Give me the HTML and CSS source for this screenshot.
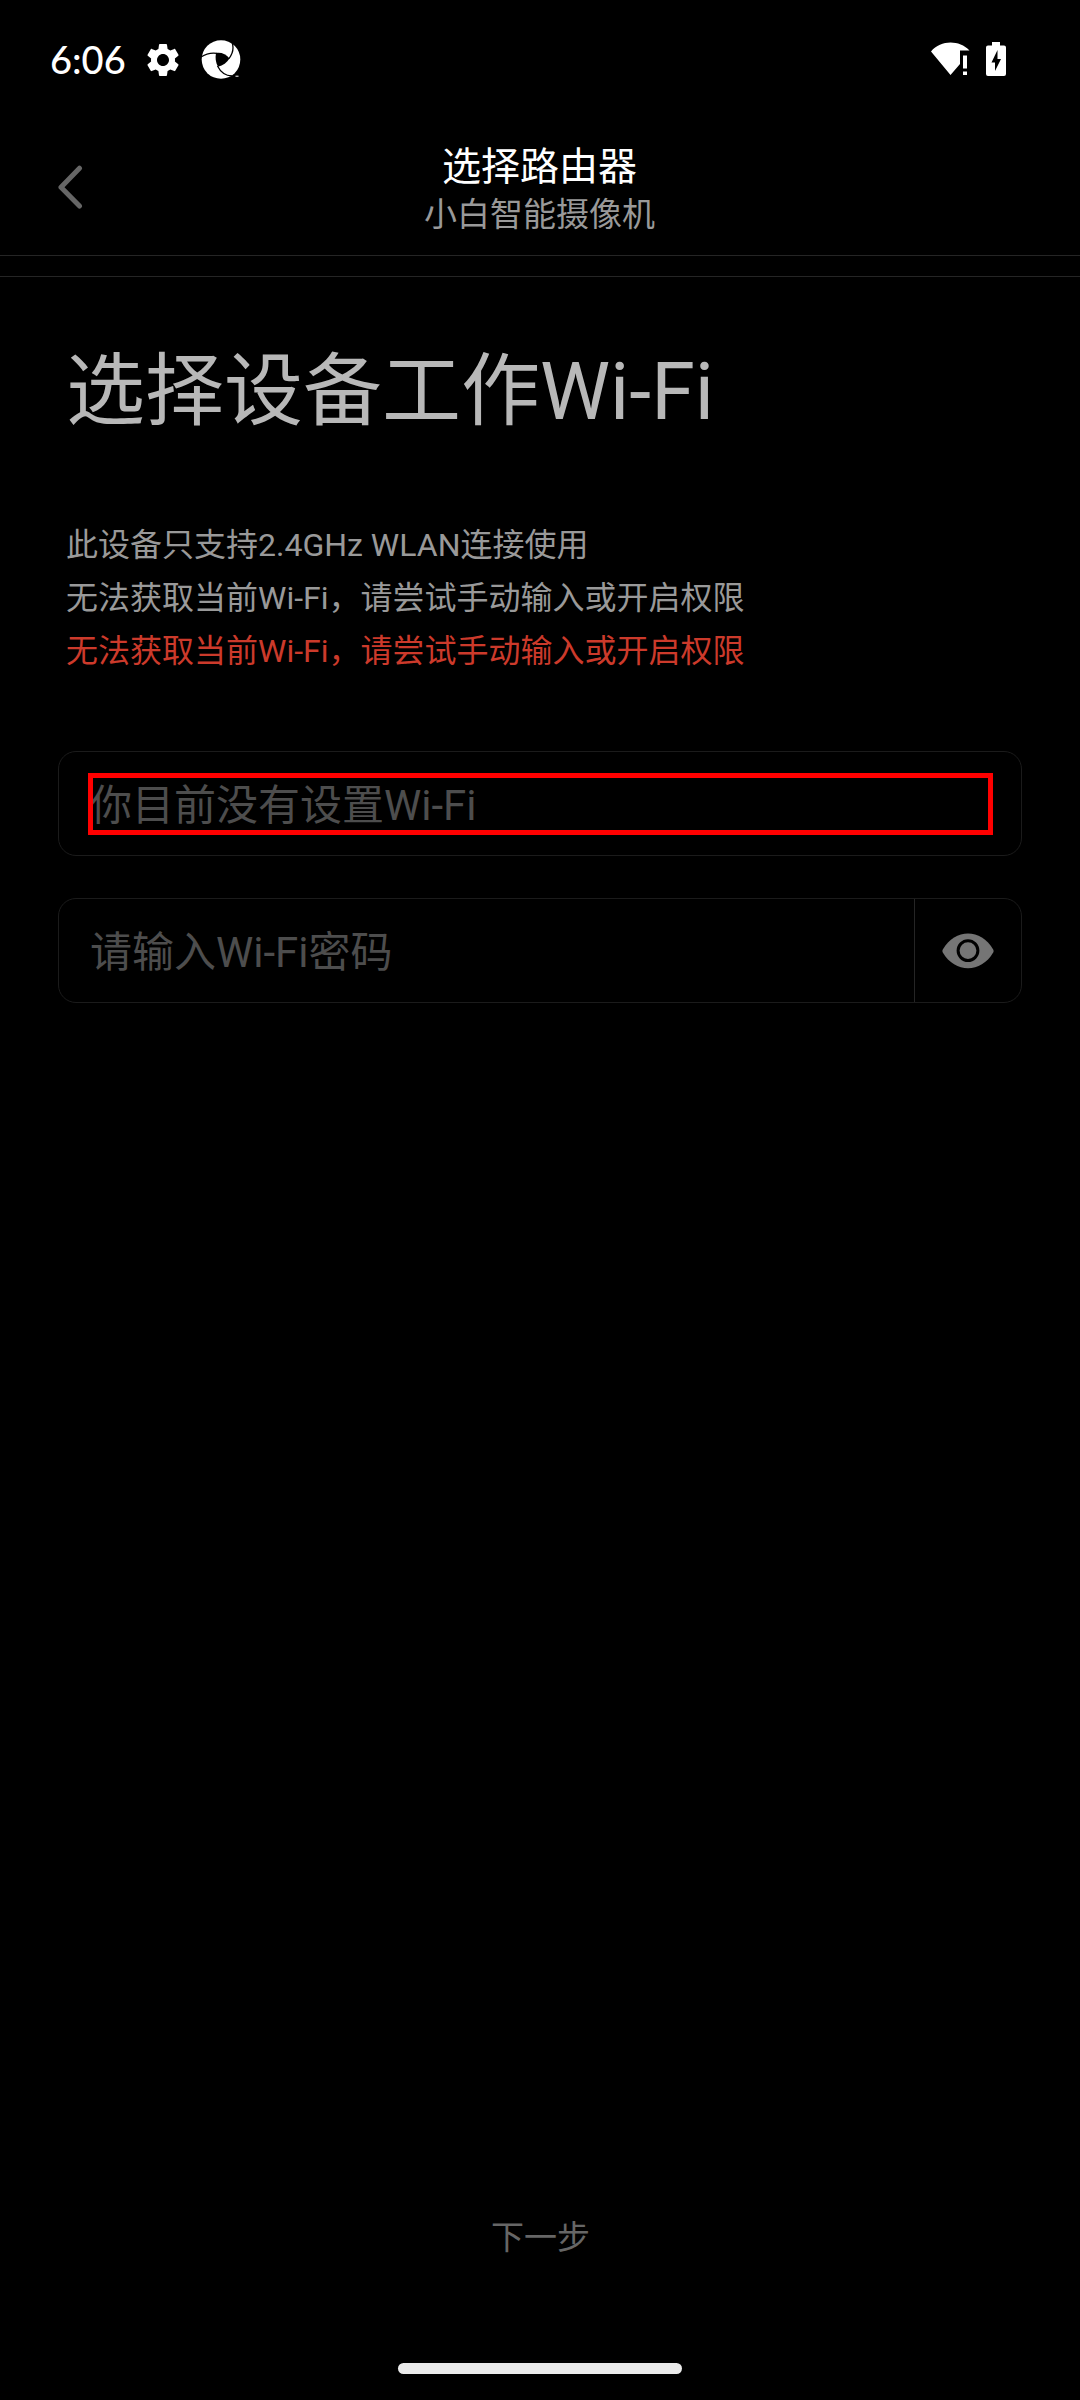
FILE: index.html
```html
<!DOCTYPE html>
<html lang="zh-CN">
<head>
<meta charset="utf-8">
<title>选择路由器</title>
<link rel="stylesheet" href="styles.css">
</head>
<body>
<div class="screen">
  <div class="status">
    <span class="clock">6:06</span>
    <svg class="gear" width="40" height="40" viewBox="0 0 24 24"><path fill="#fff" d="M19.14 12.94c.04-.3.06-.61.06-.94 0-.32-.02-.64-.07-.94l2.03-1.58c.18-.14.23-.41.12-.61l-1.92-3.32c-.12-.22-.37-.29-.59-.22l-2.39.96c-.5-.38-1.03-.7-1.62-.94l-.36-2.54c-.04-.24-.24-.41-.48-.41h-3.84c-.24 0-.43.17-.47.41l-.36 2.54c-.59.24-1.13.57-1.62.94l-2.39-.96c-.22-.08-.47 0-.59.22L2.74 8.87c-.12.21-.08.47.12.61l2.03 1.58c-.05.3-.09.63-.09.94s.02.64.07.94l-2.03 1.58c-.18.14-.23.41-.12.61l1.92 3.32c.12.22.37.29.59.22l2.39-.96c.5.38 1.03.7 1.62.94l.36 2.54c.05.24.24.41.48.41h3.84c.24 0 .44-.17.47-.41l.36-2.54c.59-.24 1.13-.56 1.62-.94l2.39.96c.22.08.47 0 .59-.22l1.92-3.32c.12-.22.07-.47-.12-.61l-2.01-1.58zM12 15.6c-1.98 0-3.6-1.62-3.6-3.6s1.62-3.6 3.6-3.6 3.6 1.62 3.6 3.6-1.62 3.6-3.6 3.6z"/></svg>
    <svg class="swirl" width="40" height="40" viewBox="0 0 40 40">
      <circle cx="20" cy="19.500" r="19.300" fill="#fff"/>
      <path fill="#000" d="M15 13C20 12 25 14 28.500 18.500C26 22.500 22 25.500 17 26.700C14.800 23 14 18 15 13Z"/>
      <path fill="none" stroke="#000" stroke-width="1.300" d="M0 17C5 13.500 10 12.500 16 13.300M31 2C33 8 32 13.500 28 18.500M16.500 26C19 31 24 35.700 31 36"/>
      <path fill="#000" d="M26 40C30 38.500 32 37 34 34.500L40 40Z"/>
      <path fill="#fff" d="M34.500 35.700h3v1h-3z"/>
    </svg>
    <span class="spacer"></span>
    <svg class="wifi" width="40" height="34" viewBox="0 0 40 34"><path fill="#fff" d="M0 9.500C10-2.200 28-2.200 38.500 8.500H29V22L19.500 33ZM32 13.500h4v13h-4zM32 29.500h4v3.500h-4z"/></svg>
    <svg class="battery" width="20" height="34" viewBox="0 0 20 34"><path fill="#fff" fill-rule="evenodd" d="M6 0h8v3.500h4q2 0 2 2V32q0 2-2 2H2q-2 0-2-2V5.500q0-2 2-2h4ZM11.500 8L5.500 20.500h3.500V29L15 17h-3.500Z"/></svg>
  </div>
  <header class="header">
    <svg class="back" width="26" height="44" viewBox="0 0 26 44"><path fill="none" stroke="#666" stroke-width="5" stroke-linecap="round" stroke-linejoin="round" d="M22.500 3.200L4 22.200L22.500 41"/></svg>
    <div class="titles">
      <div class="title">选择路由器</div>
      <div class="subtitle">小白智能摄像机</div>
    </div>
  </header>
  <div class="strip"></div>
  <main class="content">
    <h1 class="heading">选择设备工作Wi-Fi</h1>
    <p class="note">此设备只支持2.4GHz WLAN连接使用</p>
    <p class="note">无法获取当前Wi-Fi，请尝试手动输入或开启权限</p>
    <p class="note warning">无法获取当前Wi-Fi，请尝试手动输入或开启权限</p>
    <div class="field network"><span class="placeholder">你目前没有设置Wi-Fi</span><span class="focus"></span></div>
    <div class="field"><span class="placeholder">请输入Wi-Fi密码</span>
      <span class="reveal"><svg width="52" height="36" viewBox="0 0 52 36"><path fill="#757575" d="M.8 16.500C13-5 39-5 51.200 16.500Q52 18 51.200 19.500C39 40.500 13 40.500.8 19.500Q0 18 .8 16.500Z"/><circle cx="26" cy="17.600" r="9.900" fill="#757575" stroke="#000" stroke-width="3"/></svg></span>
    </div>
  </main>
  <div class="next">下一步</div>
  <div class="home"></div>
</div>
</body>
</html>
```
FILE: styles.css
```css
* { box-sizing: border-box; }
body { margin: 0; background: #000; }
.screen {
  width: 1080px;
  height: 2400px;
  display: flex;
  flex-direction: column;
  background: #000;
  color: #b8b8b8;
  font-family: Roboto, "Noto Sans CJK SC", sans-serif;
  white-space: nowrap;
}
.status { height: 120px; padding: 0 74px 0 50px; display: flex; align-items: center; }
.clock { width: 93px; padding-bottom: 2px; font: 500 38px/40px Lato, sans-serif; color: #fff; }
.swirl { margin-left: 18px; }
.spacer { flex: 1; }
.battery { margin: 0 0 2px 15px; }
.wifi { margin-bottom: 2px; }
.header {
  height: 136px;
  display: grid;
  grid-template-columns: 200px 1fr 200px;
  border-bottom: 1px solid #252525;
}
.back { margin: 45px 0 0 57px; }
.titles { padding: 22px 1px 0 0; text-align: center; }
.title { font-size: 39px; line-height: 50px; color: #fff; }
.subtitle { font-size: 33px; line-height: 46px; color: #999; }
.strip { height: 21px; border-bottom: 1px solid #252525; }
.content { flex: 1; padding: 0 58px; }
.heading { margin: 65px 0 77px 8px; font-size: 79px; line-height: 100px; font-weight: 400; }
.note { margin: 0 0 0 8px; font-size: 32px; line-height: 53px; color: #999; }
.warning { color: #cc3a2b; }
.field {
  position: relative;
  display: flex;
  align-items: stretch;
  justify-content: space-between;
  height: 105px;
  margin-top: 42px;
  padding-left: 31px;
  border: 1px solid #1b1b1b;
  border-radius: 18px;
}
.network { margin-top: 73px; }
.placeholder { padding-top: 2px; font-size: 42px; line-height: 103px; color: #4d4d4d; }
.focus { position: absolute; left: 29px; top: 21px; width: 905px; height: 62px; border: 5px solid #f00; }
.reveal { width: 107px; display: flex; align-items: center; justify-content: center; border-left: 1px solid #252525; }
.next { height: 60px; padding-left: 1px; font-size: 33px; line-height: 60px; color: #666; text-align: center; }
.home { width: 284px; height: 11px; margin: 95px auto 26px; border-radius: 6px; background: #ebebeb; }
```
